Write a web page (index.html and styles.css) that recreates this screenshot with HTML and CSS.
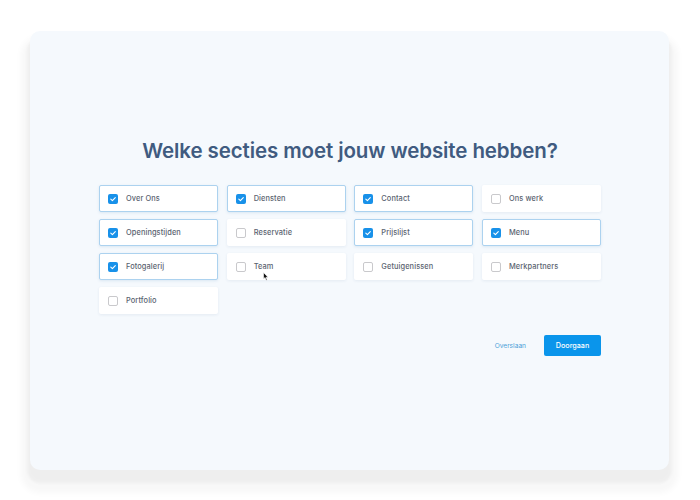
FILE: index.html
```html
<!DOCTYPE html>
<html lang="nl">
<head>
<meta charset="utf-8">
<title>Secties</title>
<link rel="stylesheet" href="styles.css">
</head>
<body>
<div class="stage">
  <div class="card">
    <h1 class="title">Welke secties moet jouw website hebben?</h1>
    <div class="grid">
      <label class="opt on"><span class="box"><svg viewBox="0 0 10 10"><path d="M2.8 5.2 L4.4 6.7 L7.3 3.6" /></svg></span>Over Ons</label>
      <label class="opt on"><span class="box"><svg viewBox="0 0 10 10"><path d="M2.8 5.2 L4.4 6.7 L7.3 3.6" /></svg></span>Diensten</label>
      <label class="opt on"><span class="box"><svg viewBox="0 0 10 10"><path d="M2.8 5.2 L4.4 6.7 L7.3 3.6" /></svg></span>Contact</label>
      <label class="opt"><span class="box"></span>Ons werk</label>
      <label class="opt on"><span class="box"><svg viewBox="0 0 10 10"><path d="M2.8 5.2 L4.4 6.7 L7.3 3.6" /></svg></span>Openingstijden</label>
      <label class="opt"><span class="box"></span>Reservatie</label>
      <label class="opt on"><span class="box"><svg viewBox="0 0 10 10"><path d="M2.8 5.2 L4.4 6.7 L7.3 3.6" /></svg></span>Prijslijst</label>
      <label class="opt on"><span class="box"><svg viewBox="0 0 10 10"><path d="M2.8 5.2 L4.4 6.7 L7.3 3.6" /></svg></span>Menu</label>
      <label class="opt on"><span class="box"><svg viewBox="0 0 10 10"><path d="M2.8 5.2 L4.4 6.7 L7.3 3.6" /></svg></span>Fotogalerij</label>
      <label class="opt team"><span class="box"></span>Team<svg class="cursor" viewBox="0 0 6 9"><path d="M0.5 0.5 L0.5 7 L2 5.6 L3.2 8.3 L4.2 7.9 L3 5.3 L5 5.2 Z" /></svg></label>
      <label class="opt"><span class="box"></span>Getuigenissen</label>
      <label class="opt"><span class="box"></span>Merkpartners</label>
      <label class="opt"><span class="box"></span>Portfolio</label>
    </div>
    <div class="actions">
      <a class="skip">Overslaan</a>
      <button class="next">Doorgaan</button>
    </div>
  </div>
</div>
</body>
</html>
```

FILE: styles.css
```css
html, body {
  margin: 0;
  padding: 0;
  background: #ffffff;
}
body {
  font-family: Inter, "Open Sans", sans-serif;
}
.stage {
  padding: 31px 31px 30px 30px;
}
.card {
  box-sizing: border-box;
  width: 639px;
  height: 439px;
  background: #f5f9fd;
  border-radius: 10px;
  box-shadow: 0 10px 3px 3px rgba(0, 0, 0, 0.035), 0 14px 6px 9px rgba(0, 0, 0, 0.03);
  padding: 107px 68px 0 69px;
}
.title {
  margin: 0;
  text-align: center;
  font-size: 20.5px;
  line-height: 25px;
  font-weight: 600;
  color: #405b80;
  letter-spacing: -0.1px;
}
.grid {
  margin-top: 22px;
  display: grid;
  grid-template-columns: repeat(4, 119px);
  grid-auto-rows: 27px;
  column-gap: 8.67px;
  row-gap: 7px;
}
.opt {
  position: relative;
  box-sizing: border-box;
  display: flex;
  align-items: center;
  background: #ffffff;
  border-radius: 2px;
  border: 1px solid transparent;
  box-shadow: 0 1px 3px rgba(60, 90, 130, 0.09);
  padding-left: 8px;
  font-size: 7.4px;
  font-weight: 500;
  letter-spacing: 0.1px;
  color: #5a6370;
}
.opt.on {
  border-color: #acd2ef;
  box-shadow: 0 1px 3px rgba(60, 120, 180, 0.14);
}
.box {
  box-sizing: border-box;
  width: 10px;
  height: 10px;
  border-radius: 2px;
  border: 1px solid #c9c9cc;
  background: #ffffff;
  margin-right: 8px;
  display: flex;
}
.on .box {
  border: none;
  background: #1891e9;
}
.box svg {
  width: 10px;
  height: 10px;
}
.box path {
  fill: none;
  stroke: #ffffff;
  stroke-width: 1.1;
  stroke-linecap: round;
  stroke-linejoin: round;
}
.cursor {
  position: absolute;
  left: 35px;
  top: 18px;
  width: 6px;
  height: 9px;
}
.cursor path {
  fill: #111111;
  stroke: #ffffff;
  stroke-width: 0.6;
}
.actions {
  margin-top: 21px;
  display: flex;
  justify-content: flex-end;
  align-items: center;
  gap: 18px;
}
.skip {
  font-size: 6.6px;
  color: #4a9fd8;
}
.next {
  width: 57px;
  height: 21px;
  border: none;
  border-radius: 2px;
  background: #0a95eb;
  color: #ffffff;
  font-family: inherit;
  font-size: 7.2px;
  font-weight: 500;
  padding: 0;
}
```
